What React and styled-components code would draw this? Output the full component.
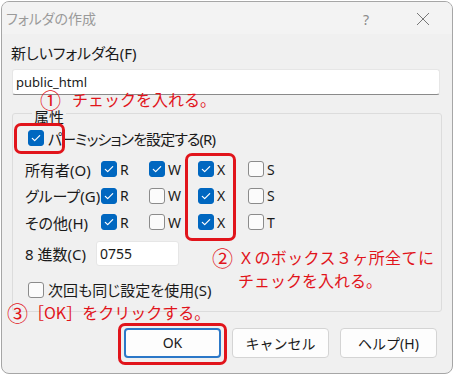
import React from "react";
import styled, { createGlobalStyle } from "styled-components";

const GlobalStyle = createGlobalStyle`
  body {
    margin: 0;
    background: #ffffff;
    font-family: "Noto Sans", "Noto Sans CJK JP", sans-serif;
    font-feature-settings: "palt";
    color: #1a1a1a;
  }
`;

const permissions = [
  { label: "所有者(O)", r: true, w: true, x: true, extra: "S" },
  { label: "グループ(G)", r: true, w: false, x: true, extra: "S" },
  { label: "その他(H)", r: true, w: false, x: true, extra: "T" },
];

function Check({ checked }) {
  return (
    <Box $checked={checked}>
      {checked && (
        <svg width="16" height="16" viewBox="0 0 16 16">
          <path
            d="M4.3 8.3l2.4 2.4 5-5"
            fill="none"
            stroke="#fff"
            strokeWidth="1.2"
            strokeLinecap="round"
            strokeLinejoin="round"
          />
        </svg>
      )}
    </Box>
  );
}

export default function App() {
  return (
    <>
      <GlobalStyle />
      <Dialog>
        <TitleBar>
          <Title>フォルダの作成</Title>
          <TitleButtons>
            <Help>?</Help>
            <svg width="14" height="14" viewBox="0 0 14 14">
              <path d="M1 1l12 12M13 1L1 13" stroke="#777" strokeWidth="1" />
            </svg>
          </TitleButtons>
        </TitleBar>

        <Body>
          <FieldLabel>新しいフォルダ名(F)</FieldLabel>
          <NameInput>public_html</NameInput>

          <Group>
            <Legend>属性</Legend>
            <CheckRow>
              <Check checked />
              <CheckText $spacing={-0.9}>パーミッションを設定する(R)</CheckText>
            </CheckRow>

            <PermGrid>
              {permissions.map((p) => (
                <React.Fragment key={p.label}>
                  <PermLabel>{p.label}</PermLabel>
                  <PermCell>
                    <Check checked={p.r} />R
                  </PermCell>
                  <PermCell>
                    <Check checked={p.w} />W
                  </PermCell>
                  <PermCell>
                    <Check checked={p.x} />X
                  </PermCell>
                  <PermCell>
                    <Check checked={false} />
                    {p.extra}
                  </PermCell>
                </React.Fragment>
              ))}
            </PermGrid>

            <OctalRow>
              <OctalLabel>8 進数(C)</OctalLabel>
              <OctalInput>0755</OctalInput>
            </OctalRow>

            <NextRow>
              <Check checked={false} />
              <CheckText>次回も同じ設定を使用(S)</CheckText>
            </NextRow>
          </Group>

          <Buttons>
            <Button $primary>OK</Button>
            <Button>キャンセル</Button>
            <Button>ヘルプ(H)</Button>
          </Buttons>
        </Body>

        {/* annotations drawn over the screenshot */}
        <Mark style={{ left: 12, top: 121, width: 51, height: 31 }} />
        <Mark style={{ left: 183, top: 151, width: 51, height: 88 }} />
        <Mark style={{ left: 116, top: 321, width: 109, height: 42 }} />

        <Note $gap={11} style={{ left: 38, top: 86 }}>
          <Circled>①</Circled>
          <NoteText>チェックを入れる。</NoteText>
        </Note>
        <Note $gap={5} style={{ left: 210, top: 244 }}>
          <Circled>②</Circled>
          <NoteLines>
            <NoteText $spacing={0.4}>Ｘのボックス３ヶ所全てに</NoteText>
            <NoteText>チェックを入れる。</NoteText>
          </NoteLines>
        </Note>
        <Note $gap={0} style={{ left: 5, top: 299 }}>
          <Circled>③</Circled>
          <NoteText>［OK］をクリックする。</NoteText>
        </Note>
      </Dialog>
    </>
  );
}

const Dialog = styled.div`
  position: relative;
  box-sizing: border-box;
  width: 452px;
  height: 373px;
  margin: 1px 0 0 1px;
  border: 1px solid #a6a6a6;
  border-radius: 8px;
  background: #f0f0f0;
  overflow: hidden;
  display: flex;
  flex-direction: column;
`;

const TitleBar = styled.div`
  display: flex;
  align-items: center;
  justify-content: space-between;
  height: 32px;
  padding: 0 22px 0 4px;
  background: #f3f3f3;
`;

const Title = styled.div`
  font-size: 14px;
  color: #9a9a9a;
`;

const TitleButtons = styled.div`
  display: flex;
  align-items: center;
  gap: 47px;
  padding-top: 2px;
`;

const Help = styled.span`
  font-size: 14px;
  color: #8a8a8a;
`;

const Body = styled.div`
  display: flex;
  flex-direction: column;
  padding: 10px 10px 0 10px;
  font-size: 15px;
`;

const FieldLabel = styled.div`
  line-height: 18px;
  margin-left: -1px;
`;

const NameInput = styled.div`
  box-sizing: border-box;
  height: 26px;
  margin: 7px 2px 0 0;
  padding: 0 3px;
  line-height: 25px;
  font-size: 13px;
  background: #ffffff;
  border: 1px solid #e6e6e6;
  border-bottom-color: #8a8a8a;
  border-radius: 3px;
`;

const Group = styled.fieldset`
  margin: 6px 0 0 0;
  padding: 0 0 12px 12px;
  border: 1px solid #dcdcdc;
  border-radius: 3px;
  display: flex;
  flex-direction: column;
`;

const Legend = styled.legend`
  margin-left: 7px;
  padding: 8px 2px 0;
  line-height: 16px;
`;

const CheckRow = styled.label`
  display: flex;
  align-items: center;
  gap: 4px;
  height: 18px;
  margin: 4px 0 0 3px;
`;

const CheckText = styled.span`
  letter-spacing: ${({ $spacing = 0 }) => $spacing}px;
  white-space: nowrap;
`;

const Box = styled.span`
  box-sizing: border-box;
  flex: none;
  display: inline-flex;
  width: 16px;
  height: 16px;
  border-radius: 3px;
  background: ${({ $checked }) => ($checked ? "#0067c0" : "#fbfbfb")};
  border: 1px solid ${({ $checked }) => ($checked ? "#0067c0" : "#8b8b8b")};
  & svg {
    margin: -1px;
  }
`;

const PermGrid = styled.div`
  display: grid;
  grid-template-columns: 76px 48px 49px 50px 50px;
  grid-auto-rows: 26.5px;
  margin-top: 9px;
  align-items: center;
`;

const PermLabel = styled.span`
  white-space: nowrap;
`;

const PermCell = styled.span`
  display: flex;
  align-items: center;
  gap: 3px;
  font-size: 14px;
`;

const OctalRow = styled.div`
  display: flex;
  align-items: center;
  gap: 10px;
  margin-top: 5px;
`;

const OctalLabel = styled.span`
  width: 61px;
  white-space: nowrap;
`;

const OctalInput = styled.div`
  box-sizing: border-box;
  width: 83px;
  height: 25px;
  padding: 0 3px;
  line-height: 24px;
  font-size: 14px;
  background: #ffffff;
  border: 1px solid #e6e6e6;
  border-radius: 3px;
`;

const NextRow = styled(CheckRow)`
  margin-top: 15px;
`;

const Buttons = styled.div`
  display: flex;
  justify-content: flex-end;
  gap: 11px;
  margin: 16px 5px 0 0;
`;

const Button = styled.button`
  box-sizing: border-box;
  width: 97px;
  height: 30px;
  font-family: inherit;
  font-size: 14px;
  color: #1a1a1a;
  background: #fdfdfd;
  border: ${({ $primary }) =>
    $primary ? "2px solid #2b78c8" : "1px solid #d4d4d4"};
  border-radius: 4px;
  padding: 0;
`;

const Mark = styled.div`
  position: absolute;
  box-sizing: border-box;
  border: 3px solid #e1141b;
  border-radius: 7px;
  pointer-events: none;
`;

const Note = styled.div`
  position: absolute;
  display: flex;
  align-items: flex-start;
  gap: ${({ $gap }) => $gap}px;
  color: #e1141b;
  font-family: "Noto Sans CJK JP", sans-serif;
  font-feature-settings: normal;
`;

const Circled = styled.span`
  font-size: 21px;
  line-height: 21px;
  margin-top: 1px;
`;

const NoteLines = styled.div`
  display: flex;
  flex-direction: column;
`;

const NoteText = styled.span`
  font-size: 16px;
  line-height: 22.5px;
  letter-spacing: ${({ $spacing = 0 }) => $spacing}px;
  white-space: nowrap;
`;
